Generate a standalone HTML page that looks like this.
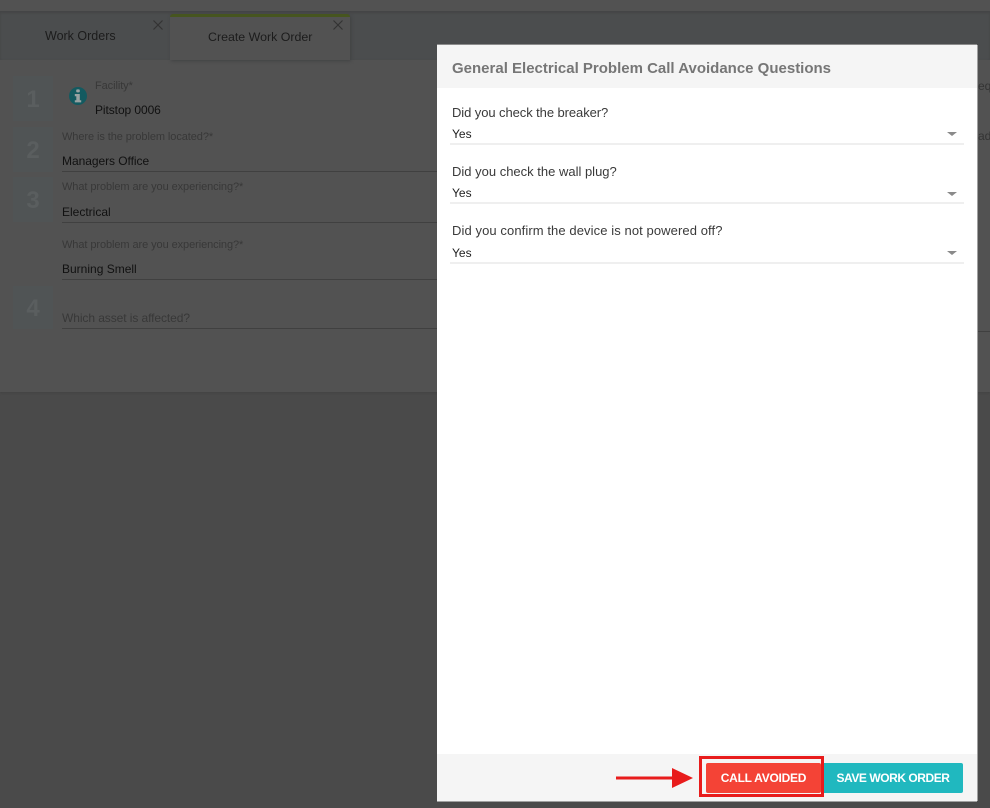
<!DOCTYPE html>
<html><head><meta charset="utf-8">
<style>
html,body{margin:0;padding:0}
body{width:990px;height:808px;position:relative;overflow:hidden;background:#4a4a4a;font-family:"Liberation Sans",sans-serif}
.a{position:absolute;white-space:nowrap}
.sq{position:absolute;left:13px;width:40px;background:#505455;color:#5a5e5f;font-weight:bold;font-size:24px;text-align:center}
.lb{position:absolute;left:62px;font-size:11px;letter-spacing:-.08px;color:#383838;white-space:nowrap;line-height:14px}
.v{position:absolute;left:62px;font-size:12px;color:#111;white-space:nowrap;line-height:14px}
.ln{position:absolute;left:62px;width:375px;height:1px;background:#404040}
.q{position:absolute;left:452px;font-size:13px;color:#3a3a3a;white-space:nowrap;line-height:16px}
.y{position:absolute;left:452px;font-size:12px;color:#222;white-space:nowrap;line-height:14px}
.u{position:absolute;left:450px;width:514px;height:2px;background:#efefef}
.t{position:absolute;left:947px;width:0;height:0;border-left:5px solid transparent;border-right:5px solid transparent;border-top:4px solid #8a8a8a}
</style></head><body>
<div class="a" style="left:0;top:0;width:990px;height:11px;background:#525252"></div>
<div class="a" style="left:0;top:11px;width:990px;height:49px;background:#4b4d4e;box-shadow:inset 0 2px 2px #444546"></div>
<div class="a" style="left:0;top:60px;width:990px;height:332px;background:#525252;box-shadow:0 1px 2px #434343"></div>

<div class="a" style="left:45px;top:29px;font-size:12.5px;line-height:15px;color:#1c1c1c">Work Orders</div>
<svg class="a" style="left:152px;top:19px" width="12" height="12"><path d="M1.5 1.5L10.5 10.5M10.5 1.5L1.5 10.5" stroke="#333" stroke-width="1.2" fill="none"/></svg>
<div class="a" style="left:170px;top:14px;width:180px;height:46px;background:#525252;border-top:3px solid #46551f;box-sizing:border-box;border-radius:3px 3px 0 0;box-shadow:1px 1px 3px #414243"></div>
<div class="a" style="left:208px;top:30px;font-size:12.4px;line-height:15px;color:#1c1c1c">Create Work Order</div>
<svg class="a" style="left:332px;top:19px" width="12" height="12"><path d="M1.5 1.5L10.5 10.5M10.5 1.5L1.5 10.5" stroke="#333" stroke-width="1.2" fill="none"/></svg>

<div class="sq" style="top:76px;height:45px;line-height:47px">1</div>
<div class="sq" style="top:127px;height:45px;line-height:48px">2</div>
<div class="sq" style="top:177px;height:45px;line-height:48px">3</div>
<div class="sq" style="top:286px;height:43px;line-height:46px">4</div>

<svg class="a" style="left:68px;top:86px" width="20" height="20" viewBox="0 0 20 20"><circle cx="10" cy="10" r="9" fill="#135a60"/><rect x="8.2" y="3.4" width="3.6" height="3" rx="1" fill="#98a2a2"/><path d="M6.8 8h5v6.2h1.4v2.2H6.8v-2.2h1.5v-4H6.8z" fill="#98a2a2"/></svg>
<div class="lb" style="left:95px;top:79px">Facility*</div>
<div class="v" style="left:95px;top:103px;letter-spacing:-.08px">Pitstop 0006</div>
<div class="lb" style="top:130px">Where is the problem located?*</div>
<div class="v" style="top:154px;letter-spacing:-.05px">Managers Office</div>
<div class="ln" style="top:171px"></div>
<div class="lb" style="top:180px">What problem are you experiencing?*</div>
<div class="v" style="top:205px">Electrical</div>
<div class="ln" style="top:222px"></div>
<div class="lb" style="top:238px">What problem are you experiencing?*</div>
<div class="v" style="top:262px">Burning Smell</div>
<div class="ln" style="top:279px"></div>
<div class="lb" style="top:311px;font-size:12px;letter-spacing:-.08px;color:#383838">Which asset is affected?</div>
<div class="ln" style="top:328px"></div>
<div class="a" style="left:978px;top:79px;font-size:12px;color:#343434">eq</div>
<div class="a" style="left:978px;top:129px;font-size:12px;color:#343434">ad</div>
<div class="a" style="left:978px;top:331px;width:12px;height:1px;background:#404040"></div>

<div class="a" style="left:437px;top:45px;width:540px;height:756px;background:#fff;box-shadow:1px 0 0 #a0a0a0,0 1px 0 #a0a0a0,0 -1px 0 #8c8c8c"></div>
<div class="a" style="left:437px;top:45px;width:540px;height:43px;background:#f5f5f5"></div>
<div class="a" style="left:452px;top:60px;font-size:15px;line-height:18px;font-weight:bold;color:#767676">General Electrical Problem Call Avoidance Questions</div>

<div class="q" style="top:105px;letter-spacing:-.08px">Did you check the breaker?</div>
<div class="y" style="top:127px">Yes</div>
<div class="t" style="top:132px"></div>
<div class="u" style="top:143px"></div>
<div class="q" style="top:164px">Did you check the wall plug?</div>
<div class="y" style="top:186px">Yes</div>
<div class="t" style="top:192px"></div>
<div class="u" style="top:202px"></div>
<div class="q" style="top:223px;letter-spacing:.09px">Did you confirm the device is not powered off?</div>
<div class="y" style="top:246px">Yes</div>
<div class="t" style="top:251px"></div>
<div class="u" style="top:262px"></div>

<div class="a" style="left:437px;top:754px;width:540px;height:47px;background:#f5f5f5"></div>
<div class="a" style="left:823px;top:763px;width:140px;height:30px;background:#20b8bf;border-radius:0 2px 2px 0;color:#fff;font-weight:bold;font-size:12px;letter-spacing:-.45px;line-height:30px;text-align:center;box-sizing:border-box">SAVE WORK ORDER</div>
<div class="a" style="left:699px;top:756px;width:125px;height:41px;box-sizing:border-box;border:3px solid #e81c1c"></div>
<div class="a" style="left:706px;top:763px;width:115px;height:30px;background:#f44336;border-radius:2px;color:#fff;font-weight:bold;font-size:12px;letter-spacing:-.25px;line-height:30px;text-align:center">CALL AVOIDED</div>
<svg class="a" style="left:616px;top:767px" width="78" height="24"><rect x="0" y="9.5" width="57" height="3" fill="#e81c1c"/><path d="M56 1L77 11L56 21z" fill="#e81c1c"/></svg>
</body></html>
